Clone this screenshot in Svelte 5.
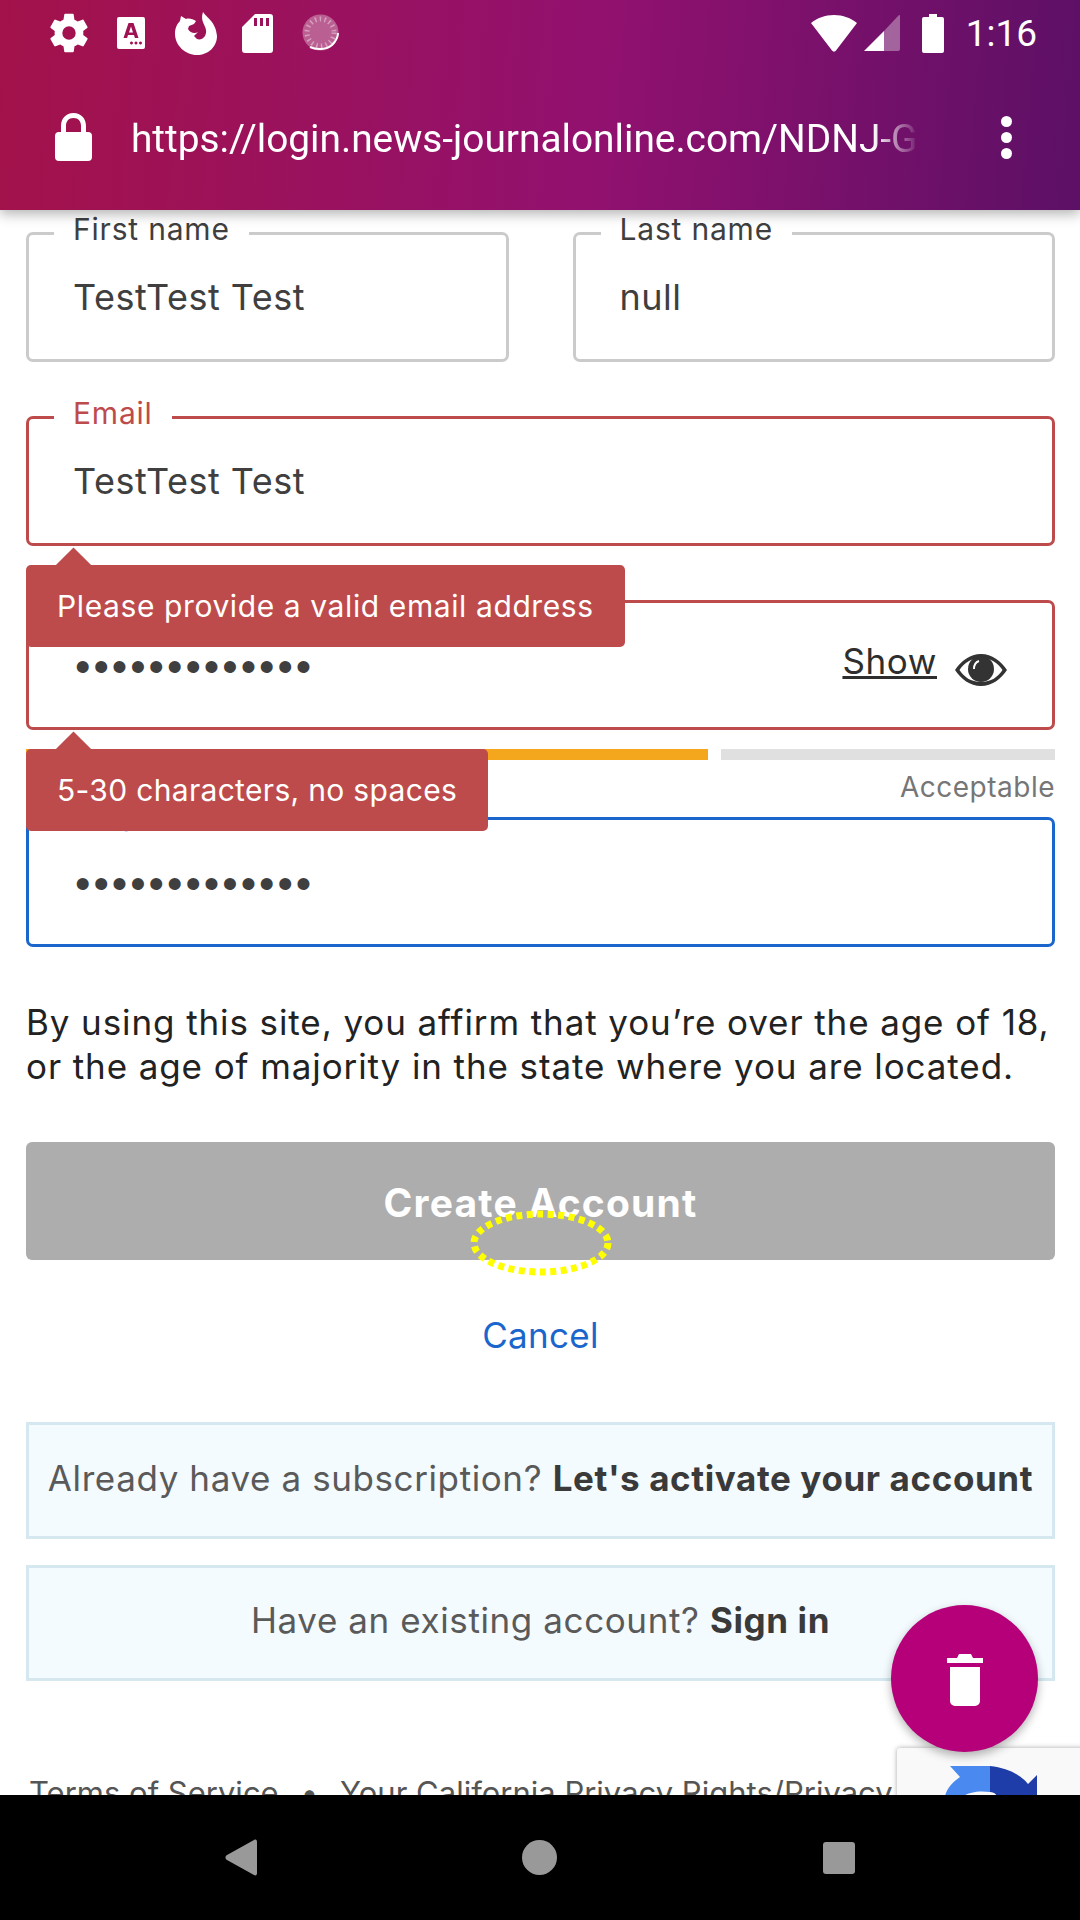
<script>
  const dots = '•••••••••••••';
</script>

<div class="screen">
  <header class="top">
    <div class="status">
      <div class="left-icons">
        <svg class="gear" viewBox="0 0 24 24"><path fill="#fff" fill-rule="evenodd" d="M19.4 13c.04-.32.07-.66.07-1s-.03-.68-.07-1l2.1-1.65c.2-.15.25-.42.12-.64l-2-3.46c-.12-.22-.39-.3-.61-.22l-2.49 1c-.52-.4-1.08-.73-1.69-.98l-.38-2.65A.49.49 0 0 0 14 2h-4c-.25 0-.46.18-.49.42l-.38 2.65c-.61.25-1.17.59-1.69.98l-2.49-1a.5.5 0 0 0-.61.22l-2 3.46c-.13.22-.07.49.12.64L4.57 11c-.04.32-.07.66-.07 1s.03.68.07 1l-2.11 1.65c-.19.15-.25.42-.12.64l2 3.46c.12.22.39.3.61.22l2.49-1c.52.4 1.08.73 1.69.98l.38 2.65c.03.24.24.42.49.42h4c.25 0 .46-.18.49-.42l.38-2.65c.61-.25 1.17-.59 1.69-.98l2.49 1c.23.09.49 0 .61-.22l2-3.46c.12-.22.07-.49-.12-.64L19.4 13zM12 15.5a3.5 3.5 0 1 1 0-7 3.5 3.5 0 0 1 0 7z"/></svg>
        <svg class="acard" viewBox="0 0 28 32"><path fill="#fff" fill-rule="evenodd" d="M2 0h24a2 2 0 0 1 2 2v28a2 2 0 0 1-2 2H2a2 2 0 0 1-2-2V2a2 2 0 0 1 2-2zM11.500 6 6.500 21h3.600l.9-3h6l.9 3h3.600l-5-15zM14 9.500l2 6h-4zM16 26a1.500 1.500 0 1 0 0 .01zM20.500 26a1.500 1.500 0 1 0 0 .01zM25 26a1.500 1.500 0 1 0 0 .01z"/></svg>
        <svg class="fox" viewBox="0 0 42 43"><path fill="#fff" d="M28 0C32 6 41 10 42 24C42 35 33 43 22 43C10 43 0 33 0 22C0 16 2 12 5 9L6 4L11 7C14 6 18 7 21 9L19 12L14 14L13 17C15 21 20 22 23 20L19 24L22 27C27 29 32 24 31 18C30 12 25 9 28 0Z"/></svg>
        <svg class="sd" viewBox="0 0 31 39"><path fill="#fff" fill-rule="evenodd" d="M13 0h15a3 3 0 0 1 3 3v33a3 3 0 0 1-3 3H3a3 3 0 0 1-3-3V13zM12 4v8h3V4zM18 4v8h3V4zM24 4v8h3V4z"/></svg>
        <svg class="spin" viewBox="0 0 38 38">
          <circle cx="18.500" cy="18.500" r="18" fill="#fff" opacity=".33"/>
          <circle cx="18.500" cy="18.500" r="13.500" fill="none" stroke="#fff" stroke-width="5" stroke-dasharray="1.500 3.300" opacity=".4"/>
          <path d="M8 33c6 3 16 3 22-2 3-3 6-7 6-12" fill="none" stroke="#fff" stroke-width="2"/>
        </svg>
      </div>
      <div class="right-icons">
        <svg class="wifi" viewBox="0 0 46 37"><path fill="#fff" d="M23 0C14 0 6 3 0 8l21 27.500c1 1.500 3 1.500 4 0L46 8C40 3 32 0 23 0z"/></svg>
        <svg class="signal" viewBox="0 0 36 36"><path fill="#fff" opacity=".35" d="M35 0 20 16v20h14a2 2 0 0 0 2-2V1c0-1-.5-1-1-1z"/><path fill="#fff" d="M20 16 0 36h20z"/></svg>
        <svg class="battery" viewBox="0 0 22 39"><path fill="#fff" d="M7 0h8v3h5a2 2 0 0 1 2 2v32a2 2 0 0 1-2 2H2a2 2 0 0 1-2-2V5a2 2 0 0 1 2-2h5z"/></svg>
        <span class="time">1:16</span>
      </div>
    </div>
    <div class="urlbar">
      <svg class="lock" viewBox="0 0 37 48"><path fill="#fff" fill-rule="evenodd" d="M18.500 0C11 0 6 5.500 6 13v6H4a4 4 0 0 0-4 4v21a4 4 0 0 0 4 4h29a4 4 0 0 0 4-4V23a4 4 0 0 0-4-4h-2v-6C31 5.500 26 0 18.500 0zm0 5C23.500 5 26 8.500 26 13v6H11v-6c0-4.500 2.500-8 7.500-8z"/></svg>
      <div class="url">https://login.news-journalonline.com/NDNJ-G</div>
      <div class="menu"><i></i><i></i><i></i></div>
    </div>
  </header>

  <main class="page">
    <div class="names">
      <div class="field">
        <span class="label">First name</span>
        <span class="value">TestTest Test</span>
      </div>
      <div class="field">
        <span class="label">Last name</span>
        <span class="value">null</span>
      </div>
    </div>

    <div class="field error spaced">
      <span class="label">Email</span>
      <span class="value">TestTest Test</span>
      <div class="tip">Please provide a valid email address</div>
    </div>

    <div class="field error spaced">
      <span class="value secret">{dots}</span>
      <span class="show">Show</span>
      <svg class="eye" viewBox="0 0 52 32">
        <path fill="#333" fill-rule="evenodd" d="M26 0C15 0 6 7 0 16C6 25 15 32 26 32C37 32 46 25 52 16C46 7 37 0 26 0ZM26 4C16 4 9 9 4.500 16C9 23 16 28 26 28C36 28 43 23 47.500 16C43 9 36 4 26 4Z"/>
        <circle cx="26" cy="15" r="13" fill="#333"/>
        <path d="M19 15C19 11 21 8 24 7" fill="none" stroke="#fff" stroke-width="2"/>
      </svg>
      <div class="tip short">5-30 characters, no spaces</div>
    </div>

    <div class="strength">
      <div class="bars"><i class="on"></i><i class="on"></i><i></i></div>
      <div class="rating">Acceptable</div>
    </div>

    <div class="field focus">
      <span class="label">Retype password</span>
      <span class="value secret">{dots}</span>
    </div>

    <p class="legal">By using this site, you affirm that you’re over the age of 18, or the age of majority in the state where you are located.</p>

    <button class="create">Create Account</button>
    <a class="cancel" href="#cancel">Cancel</a>

    <div class="notice">Already have a subscription? <b>Let's activate your account</b></div>
    <div class="notice second">Have an existing account? <b>Sign in</b></div>

    <div class="foot">Terms of Service<span class="sep">•</span>Your California Privacy Rights/Privacy</div>

    <svg class="tap" viewBox="0 0 144 66"><ellipse cx="72" cy="33" rx="67" ry="29" fill="none" stroke="#ffff00" stroke-width="7" stroke-dasharray="6 4.500"/></svg>

    <div class="captcha">
      <svg viewBox="0 0 92 30">
        <path fill="#4a8af0" d="M5 0H45V26C30 24 22 28 18 30H0C2 22 8 16 15 11Z"/>
        <path fill="#1f3da8" d="M45 0C62 2 75 8 83 18L92 9V30H52C50 27 48 26 45 26Z"/>
      </svg>
    </div>

    <button class="fab" aria-label="Delete">
      <svg viewBox="0 0 36 54"><path fill="#fff" d="M3 15h30v34a5 5 0 0 1-5 5H8a5 5 0 0 1-5-5zM0 6h10l2-4h12l2 4h10v5H0z"/></svg>
    </button>
  </main>

  <nav class="nav">
    <svg class="back" viewBox="0 0 32 37"><path fill="#999" d="M29 1 2 16c-2 1-2 4 0 5l27 15c2 1 3 0 3-2V3c0-2-1-3-3-2z"/></svg>
    <span class="home"></span>
    <span class="recent"></span>
  </nav>
</div>

<style>
  :global(body) { margin: 0; background: #fff; }
  .screen {
    width: 1080px; height: 1920px; display: flex; flex-direction: column; overflow: hidden;
    font-family: "Inter", "Lato", sans-serif; color: #3f3f3f;
  }
  .top {
    height: 210px; flex: none; position: relative; z-index: 3;
    background: linear-gradient(95deg, #a3124a 0%, #92116f 55%, #5c1066 100%);
    box-shadow: 0 4px 12px rgba(0,0,0,.3);
    display: flex; flex-direction: column;
  }
  .status { height: 66px; display: flex; justify-content: space-between; align-items: center; padding: 0 43px 0 49px; }
  .left-icons, .right-icons { display: flex; align-items: center; }
  .gear { width: 46px; height: 46px; margin-right: 25px; margin-left: -3px; }
  .acard { width: 28px; height: 32px; margin-right: 30px; }
  .fox { width: 42px; height: 43px; margin-right: 25px; }
  .sd { width: 31px; height: 39px; margin-right: 29px; }
  .spin { width: 38px; height: 38px; }
  .wifi { width: 46px; height: 37px; margin-right: 7px; }
  .signal { width: 36px; height: 36px; margin-right: 22px; }
  .battery { width: 22px; height: 39px; margin-right: 22px; }
  .time { font: 400 37px/1 "Roboto", sans-serif; color: #fff; }
  .urlbar { flex: 1; display: flex; align-items: center; padding: 0 0 2px 55px; }
  .lock { width: 37px; height: 48px; margin-right: 39px; flex: none; }
  .url {
    width: 789px; white-space: nowrap; overflow: hidden; color: #fff; margin-top: 4px;
    font: 400 38.800px/1.3 "Roboto", sans-serif;
    mask-image: linear-gradient(90deg, #000 94%, transparent 100%);
  }
  .menu { margin-left: 81px; display: flex; flex-direction: column; gap: 5px; }
  .menu i { width: 11px; height: 11px; border-radius: 50%; background: #fff; display: block; }

  .page { flex: 1; min-height: 0; position: relative; overflow: hidden; padding: 22px 25px 0 26px; }
  .names { display: grid; grid-template-columns: 1fr 1fr; gap: 64px; }
  .field {
    position: relative; height: 130px; box-sizing: border-box;
    border: 3px solid #cbcbcb; border-radius: 7px; background: #fff;
    display: flex; align-items: center; padding: 0 45px 0 44px;
  }
  .spaced { margin-top: 54px; }
  .error { border-color: #be4b4b; }
  .error .label { color: #be4b4b; }
  .focus { border-color: #1a66cc; margin-top: 13px; }
  .focus .label { color: #1a66cc; }
  .label {
    position: absolute; left: 25px; top: -23px; background: #fff; padding: 0 19px;
    font-size: 30px; letter-spacing: .8px; line-height: 34px; white-space: nowrap;
  }
  .value { font-size: 36px; letter-spacing: .5px; }
  .secret { flex: 1; font-family: "Liberation Sans", sans-serif; font-size: 44px; letter-spacing: 3px; margin-top: 3px; padding-left: 2px; }
  .show { font-size: 35px; letter-spacing: .6px; text-decoration: underline; color: #2e2e2e; margin-right: 18px; margin-top: -8px; }
  .eye { width: 52px; height: 32px; flex: none; margin-top: 9px; }
  .tip {
    position: absolute; left: -3px; top: calc(100% + 22px); z-index: 2;
    background: #be4b4b; color: #fff; border-radius: 5px; white-space: nowrap;
    height: 82px; display: flex; align-items: center; padding: 0 31px;
    font-size: 30px; letter-spacing: .6px;
  }
  .tip.short { letter-spacing: .32px; }
  .tip::before {
    content: ""; position: absolute; left: 34px; top: -12px; width: 27px; height: 27px;
    background: #be4b4b; transform: rotate(45deg);
  }
  .strength { margin-top: 19px; }
  .bars { display: grid; grid-template-columns: repeat(3, 1fr); gap: 13px; }
  .bars i { height: 11px; background: #e0e0e0; display: block; }
  .bars i.on { background: #f4a71d; }
  .rating { text-align: right; font-size: 28px; letter-spacing: .5px; line-height: 34px; margin-top: 10px; color: #767676; }
  .legal { margin: 53px 0 0; font-size: 35px; letter-spacing: .9px; line-height: 44px; color: #222; }
  .create {
    display: block; width: 100%; height: 118px; margin-top: 54px; border: 0; border-radius: 6px; padding: 3px 0 0;
    background: #adadad; color: #fff; font: 700 39px "Inter", sans-serif; letter-spacing: 1.2px;
  }
  .cancel { display: block; text-align: center; color: #1a66cc; font-size: 35px; letter-spacing: .3px; line-height: 44px; margin-top: 53px; text-decoration: none; }
  .notice {
    box-sizing: border-box; height: 117px; margin-top: 65px; background: #f4fbfe; padding-bottom: 6px;
    border: 3px solid #d5e8f0; display: flex; align-items: center; justify-content: center; gap: .3em;
    font-size: 35px; letter-spacing: .6px; color: #5a5a5a; white-space: nowrap;
  }
  .notice b { color: #3a3a3a; }
  .second { margin-top: 26px; height: 116px; }
  .foot { font-size: 31px; color: #555; margin: 93px 0 0 3px; white-space: nowrap; }
  .sep { margin: 0 22px; }
  .tap { position: absolute; left: 469px; top: 1000px; width: 144px; height: 66px; }
  .fab {
    position: absolute; left: 891px; top: 1395px; width: 147px; height: 147px; border-radius: 50%;
    border: 0; padding: 0; background: #b5007a; box-shadow: 0 4px 10px rgba(0,0,0,.3);
    display: flex; align-items: center; justify-content: center;
  }
  .fab svg { width: 36px; height: 54px; }
  .captcha {
    position: absolute; left: 897px; top: 1538px; width: 200px; height: 60px; background: #f9f9f9;
    border-radius: 3px; box-shadow: 0 0 5px rgba(0,0,0,.35);
  }
  .captcha svg { position: absolute; left: 48px; top: 18px; width: 92px; height: 30px; }
  .nav { height: 125px; flex: none; background: #000; position: relative; z-index: 4; display: flex; align-items: center; }
  .back { width: 32px; height: 37px; margin-left: 225px; }
  .home { width: 35px; height: 35px; border-radius: 50%; background: #999; margin-left: 265px; }
  .recent { width: 32px; height: 32px; border-radius: 3px; background: #999; margin-left: 266px; }
</style>
